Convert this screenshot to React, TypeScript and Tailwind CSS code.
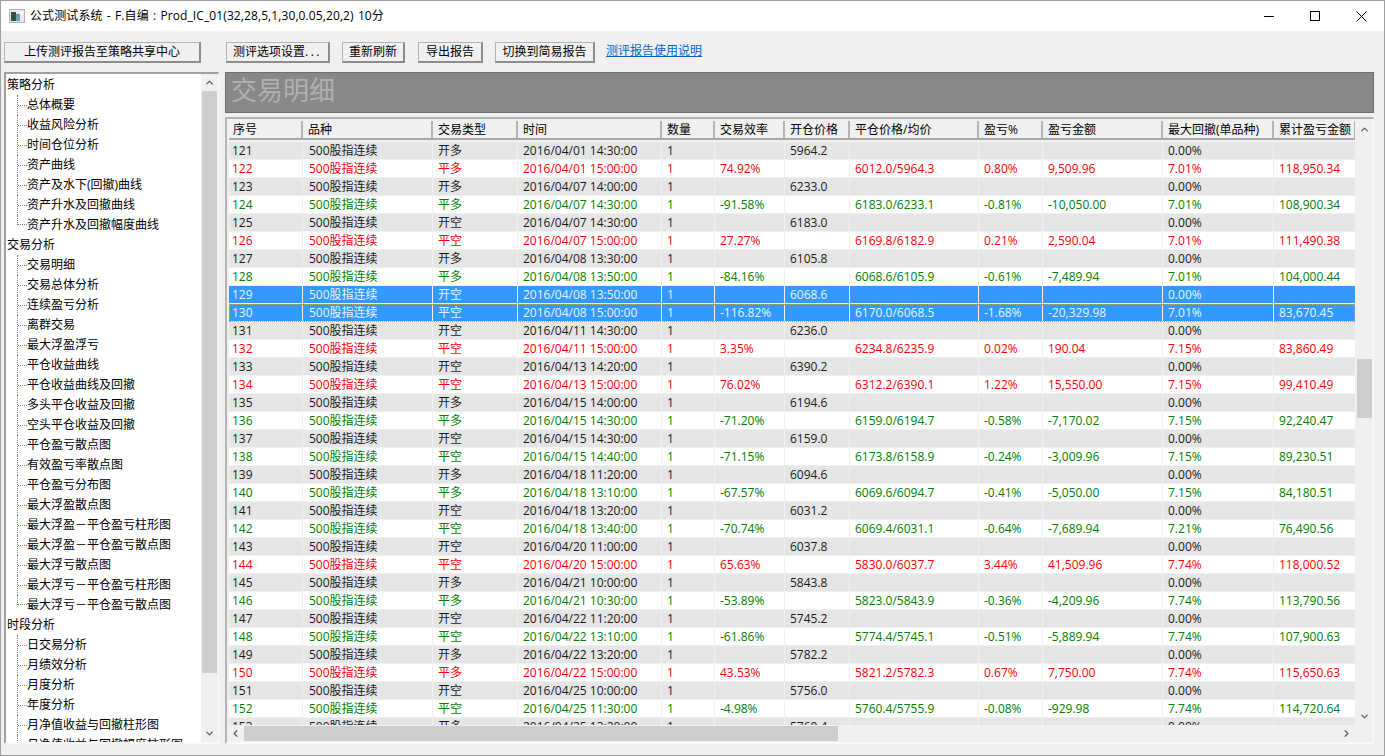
import React from "react";
import { ChevronUp, ChevronDown, ChevronLeft, ChevronRight } from "lucide-react";

type Trade = {
  no: number;
  type: string;
  time: string;
  eff?: string;
  open?: string;
  close?: string;
  pct?: string;
  amount?: string;
  dd: string;
  total?: string;
};

const open = (no: number, type: string, time: string, price: string): Trade => ({
  no,
  type,
  time,
  open: price,
  dd: "0.00%",
});

const close = (
  no: number,
  type: string,
  time: string,
  eff: string,
  closePrice: string,
  pct: string,
  amount: string,
  dd: string,
  total: string
): Trade => ({ no, type, time, eff, close: closePrice, pct, amount, dd, total });

const trades: Trade[] = [
  open(121, "开多", "2016/04/01 14:30:00", "5964.2"),
  close(122, "平多", "2016/04/01 15:00:00", "74.92%", "6012.0/5964.3", "0.80%", "9,509.96", "7.01%", "118,950.34"),
  open(123, "开多", "2016/04/07 14:00:00", "6233.0"),
  close(124, "平多", "2016/04/07 14:30:00", "-91.58%", "6183.0/6233.1", "-0.81%", "-10,050.00", "7.01%", "108,900.34"),
  open(125, "开空", "2016/04/07 14:30:00", "6183.0"),
  close(126, "平空", "2016/04/07 15:00:00", "27.27%", "6169.8/6182.9", "0.21%", "2,590.04", "7.01%", "111,490.38"),
  open(127, "开多", "2016/04/08 13:30:00", "6105.8"),
  close(128, "平多", "2016/04/08 13:50:00", "-84.16%", "6068.6/6105.9", "-0.61%", "-7,489.94", "7.01%", "104,000.44"),
  open(129, "开空", "2016/04/08 13:50:00", "6068.6"),
  close(130, "平空", "2016/04/08 15:00:00", "-116.82%", "6170.0/6068.5", "-1.68%", "-20,329.98", "7.01%", "83,670.45"),
  open(131, "开空", "2016/04/11 14:30:00", "6236.0"),
  close(132, "平空", "2016/04/11 15:00:00", "3.35%", "6234.8/6235.9", "0.02%", "190.04", "7.15%", "83,860.49"),
  open(133, "开空", "2016/04/13 14:20:00", "6390.2"),
  close(134, "平空", "2016/04/13 15:00:00", "76.02%", "6312.2/6390.1", "1.22%", "15,550.00", "7.15%", "99,410.49"),
  open(135, "开多", "2016/04/15 14:00:00", "6194.6"),
  close(136, "平多", "2016/04/15 14:30:00", "-71.20%", "6159.0/6194.7", "-0.58%", "-7,170.02", "7.15%", "92,240.47"),
  open(137, "开空", "2016/04/15 14:30:00", "6159.0"),
  close(138, "平空", "2016/04/15 14:40:00", "-71.15%", "6173.8/6158.9", "-0.24%", "-3,009.96", "7.15%", "89,230.51"),
  open(139, "开多", "2016/04/18 11:20:00", "6094.6"),
  close(140, "平多", "2016/04/18 13:10:00", "-67.57%", "6069.6/6094.7", "-0.41%", "-5,050.00", "7.15%", "84,180.51"),
  open(141, "开空", "2016/04/18 13:20:00", "6031.2"),
  close(142, "平空", "2016/04/18 13:40:00", "-70.74%", "6069.4/6031.1", "-0.64%", "-7,689.94", "7.21%", "76,490.56"),
  open(143, "开空", "2016/04/20 11:00:00", "6037.8"),
  close(144, "平空", "2016/04/20 15:00:00", "65.63%", "5830.0/6037.7", "3.44%", "41,509.96", "7.74%", "118,000.52"),
  open(145, "开多", "2016/04/21 10:00:00", "5843.8"),
  close(146, "平多", "2016/04/21 10:30:00", "-53.89%", "5823.0/5843.9", "-0.36%", "-4,209.96", "7.74%", "113,790.56"),
  open(147, "开空", "2016/04/22 11:20:00", "5745.2"),
  close(148, "平空", "2016/04/22 13:10:00", "-61.86%", "5774.4/5745.1", "-0.51%", "-5,889.94", "7.74%", "107,900.63"),
  open(149, "开多", "2016/04/22 13:20:00", "5782.2"),
  close(150, "平多", "2016/04/22 15:00:00", "43.53%", "5821.2/5782.3", "0.67%", "7,750.00", "7.74%", "115,650.63"),
  open(151, "开空", "2016/04/25 10:00:00", "5756.0"),
  close(152, "平空", "2016/04/25 11:30:00", "-4.98%", "5760.4/5755.9", "-0.08%", "-929.98", "7.74%", "114,720.64"),
  open(153, "开多", "2016/04/25 13:20:00", "5760.4"),
];

const tree = [
  {
    title: "策略分析",
    items: ["总体概要", "收益风险分析", "时间仓位分析", "资产曲线", "资产及水下(回撤)曲线", "资产升水及回撤曲线", "资产升水及回撤幅度曲线"],
  },
  {
    title: "交易分析",
    items: [
      "交易明细",
      "交易总体分析",
      "连续盈亏分析",
      "离群交易",
      "最大浮盈浮亏",
      "平仓收益曲线",
      "平仓收益曲线及回撤",
      "多头平仓收益及回撤",
      "空头平仓收益及回撤",
      "平仓盈亏散点图",
      "有效盈亏率散点图",
      "平仓盈亏分布图",
      "最大浮盈散点图",
      "最大浮盈－平仓盈亏柱形图",
      "最大浮盈－平仓盈亏散点图",
      "最大浮亏散点图",
      "最大浮亏－平仓盈亏柱形图",
      "最大浮亏－平仓盈亏散点图",
    ],
  },
  {
    title: "时段分析",
    items: ["日交易分析", "月绩效分析", "月度分析", "年度分析", "月净值收益与回撤柱形图", "月净值收益与回撤幅度柱形图"],
  },
];

const headers = ["序号", "品种", "交易类型", "时间", "数量", "交易效率", "开仓价格", "平仓价格/均价", "盈亏%", "盈亏金额", "最大回撤(单品种)", "累计盈亏金额"];

const columns = "grid grid-cols-[74px_130px_85px_144px_53px_70px_65px_129px_64px_120px_111px_82px]";

const ToolButton = ({ label, width, children }: { label: string; width: string; children?: React.ReactNode }) => (
  <button
    className={`${width} h-[21px] flex items-center justify-center bg-[#f0f0f0] border border-t-[#b4b4b4] border-l-[#b4b4b4] border-r-2 border-b-2 border-r-[#8c8c8c] border-b-[#8c8c8c] text-[12px] text-black`}
  >
    {label}
    {children}
  </button>
);

const TreeItem = ({ label, last }: { label: string; last: boolean }) => (
  <div className="flex h-5 pl-[10px]">
    {last ? (
      <span className="w-[10px] h-[10px] flex items-end border-l border-dotted border-[#808080]">
        <span className="w-full border-t border-dotted border-[#808080]" />
      </span>
    ) : (
      <span className="w-[10px] h-5 flex items-center border-l border-dotted border-[#808080]">
        <span className="w-full border-t border-dotted border-[#808080]" />
      </span>
    )}
    <span className="leading-5 whitespace-nowrap">{label}</span>
  </div>
);

const Row = ({ t }: { t: Trade }) => {
  const selected = t.no === 129 || t.no === 130;
  const isOpen = t.open !== undefined;
  const loss = t.eff?.startsWith("-");
  let tone = "bg-white text-[#ff0000]";
  if (isOpen) tone = "bg-[#e5e5e5] text-[#1a1a1a]";
  else if (loss) tone = "bg-white text-[#008000]";
  if (selected) tone = "bg-[#3399ff] text-[#e6f2ff]";

  const cells = ["" + t.no, "500股指连续", t.type, t.time, "1", t.eff, t.open, t.close, t.pct, t.amount, t.dd, t.total];
  return (
    <div className={`${columns} h-[18px] shrink-0 ${tone} ${t.no === 130 ? "outline outline-1 -outline-offset-1 outline-dotted outline-[#c8a060]" : ""}`}>
      {cells.map((c, i) => (
        <div
          key={i}
          className={`${i === 0 ? "pl-[3px]" : i === 1 ? "pl-[6px]" : "pl-[5px]"} leading-[17px] whitespace-nowrap overflow-hidden border-r border-b border-[#f0f0f0]`}
        >
          {c}
        </div>
      ))}
    </div>
  );
};

export default function App() {
  return (
    <div
      className="w-[1385px] h-[756px] flex flex-col overflow-hidden bg-[#f0f0f0] border border-[#a0a0a0] text-[12px] text-[#1a1a1a]"
      style={{ fontFamily: '"Open Sans", "Noto Sans CJK SC", sans-serif' }}
    >
      {/* title bar */}
      <div className="h-[30px] shrink-0 bg-white flex items-center pl-[8px]">
        <svg width="16" height="14" viewBox="0 0 16 14" className="shrink-0">
          <rect x="0.5" y="0.5" width="15" height="13" fill="#e8e8e8" stroke="#b0b0b0" />
          <rect x="2" y="3" width="5" height="9" fill="#2f4f4f" />
          <rect x="7" y="5" width="4" height="7" fill="#6fa0a8" />
          <rect x="11" y="3" width="3" height="3" fill="#ffffff" />
        </svg>
        <span className="ml-[5px] text-[12px] text-black whitespace-nowrap tracking-[0.1px] [word-spacing:1px]">
          公式测试系统 - F.自编 : Prod_IC_01(32,28,5,1,30,0.05,20,2) 10分
        </span>
        <div className="ml-auto flex items-center h-full">
          <div className="w-[46px] flex justify-center">
            <svg width="10" height="10" viewBox="0 0 10 10"><path d="M0 5.5H10" stroke="#000" strokeWidth="1" /></svg>
          </div>
          <div className="w-[46px] flex justify-center">
            <svg width="10" height="10" viewBox="0 0 10 10"><rect x="0.5" y="0.5" width="9" height="9" fill="none" stroke="#000" /></svg>
          </div>
          <div className="w-[46px] flex justify-center">
            <svg width="11" height="11" viewBox="0 0 11 11"><path d="M0.5 0.5L10.5 10.5M10.5 0.5L0.5 10.5" stroke="#000" strokeWidth="1" /></svg>
          </div>
        </div>
      </div>

      {/* toolbar */}
      <div className="h-[41px] shrink-0 flex items-center pl-[3px] pt-[1px]">
        <ToolButton label="上传测评报告至策略共享中心" width="w-[197px]" />
        <div className="w-[25px]" />
        <ToolButton label="测评选项设置" width="w-[104px]">
          <span className="tracking-[2.5px]">...</span>
        </ToolButton>
        <div className="w-[12px]" />
        <ToolButton label="重新刷新" width="w-[63px]" />
        <div className="w-[13px]" />
        <ToolButton label="导出报告" width="w-[65px]" />
        <div className="w-[12px]" />
        <ToolButton label="切换到简易报告" width="w-[100px]" />
        <a className="ml-[11px] -mt-[3px] text-[#0066cc] underline whitespace-nowrap">测评报告使用说明</a>
      </div>

      <div className="flex-1 min-h-0 flex pl-[3px] pr-[10px] pb-[11px]">
        {/* tree panel */}
        <div className="w-[215px] shrink-0 flex bg-white border-2 border-r border-t-[#a0a0a0] border-l-[#a0a0a0] border-r-[#fafafa] border-b-[#fafafa] overflow-hidden text-black">
          <div className="flex-1 min-w-0 overflow-hidden pl-[1px] pt-[1px]">
            {tree.map((g) => (
              <div key={g.title}>
                <div className="h-5 leading-5">{g.title}</div>
                {g.items.map((it, i) => (
                  <TreeItem key={it} label={it} last={i === g.items.length - 1 && g.title !== "时段分析"} />
                ))}
              </div>
            ))}
          </div>
          <div className="w-[17px] shrink-0 bg-[#f0f0f0] flex flex-col items-center">
            <div className="h-[17px] flex items-center justify-center">
              <ChevronUp size={11} strokeWidth={3} className="text-[#606060]" />
            </div>
            <div className="w-[15px] h-[582px] bg-[#cdcdcd]" />
            <div className="mt-auto h-[17px] flex items-center justify-center">
              <ChevronDown size={11} strokeWidth={3} className="text-[#606060]" />
            </div>
          </div>
        </div>

        <div className="w-[6px] shrink-0" />

        <div className="flex-1 min-w-0 flex flex-col">
          {/* section heading */}
          <div className="h-[41px] shrink-0 bg-[#888888] border border-[#6e6e6e] flex items-center pl-[5px] pb-[6px]">
            <span className="text-[26px] leading-none text-[#b0b0b0]">交易明细</span>
          </div>

          {/* trade table */}
          <div className="mt-[4px] flex-1 min-h-0 flex flex-col border-2 border-r border-t-[#b4b4b4] border-l-[#b4b4b4] border-r-[#fafafa] border-b-[#fafafa]">
            <div className="flex-1 min-h-0 flex">
              <div className="flex-1 min-w-0 flex flex-col overflow-hidden pl-[2px] pt-[2px] bg-[#f0f0f0]">
                <div className={`${columns} h-[19px] shrink-0 bg-[#f0f0f0] border-b-2 border-[#a8a8a8] text-black`}>
                  {headers.map((h, i) => (
                    <div
                      key={h}
                      className={`${i === 0 ? "pl-[4px]" : "pl-[5px]"} leading-[17px] whitespace-nowrap overflow-hidden border-r-2 border-[#b4b4b4]`}
                    >
                      {h}
                    </div>
                  ))}
                </div>
                <div className="h-[2px] shrink-0 bg-[#f0f0f0]" />
                <div className="flex-1 min-h-0 overflow-hidden">
                  {trades.map((t) => (
                    <Row key={t.no} t={t} />
                  ))}
                </div>
              </div>
              <div className="w-[18px] shrink-0 bg-[#f0f0f0] flex flex-col items-center">
                <div className="h-[17px] mt-[2px] flex items-center justify-center">
                  <ChevronUp size={11} strokeWidth={3} className="text-[#606060]" />
                </div>
                <div className="w-[15px] h-[59px] mt-[221px] bg-[#cdcdcd]" />
                <div className="mt-auto h-[17px] flex items-center justify-center">
                  <ChevronDown size={11} strokeWidth={3} className="text-[#606060]" />
                </div>
              </div>
            </div>
            <div className="h-[17px] shrink-0 bg-[#f0f0f0] flex items-center">
              <div className="w-[17px] flex justify-center">
                <ChevronLeft size={11} strokeWidth={3} className="text-[#606060]" />
              </div>
              <div className="w-[594px] h-[15px] bg-[#cdcdcd]" />
              <div className="ml-auto mr-[18px] w-[17px] flex justify-center">
                <ChevronRight size={11} strokeWidth={3} className="text-[#606060]" />
              </div>
            </div>
          </div>
        </div>
      </div>
    </div>
  );
}
